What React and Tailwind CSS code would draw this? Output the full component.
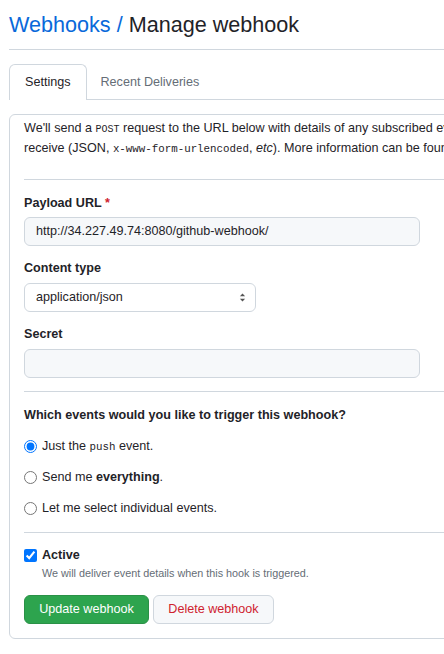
import React from 'react';

const App = () => {
  const mono = { fontFamily: '"Liberation Mono", "DejaVu Sans Mono", monospace' };

  return (
    <div className="w-[444px] h-[654px] overflow-hidden bg-white text-[#1f2328]" style={{ fontFamily: '"Liberation Sans", Arial, sans-serif' }}>
      <div className="w-[760px] pl-[9px]">
        {/* Header */}
        <h2 className="text-[21.6px] leading-[28px] pt-[11px] pb-[10px] border-b border-[#d0d7de]">
          <span className="text-[#0969da]">Webhooks /</span> Manage webhook
        </h2>

        {/* Tabs */}
        <div className="flex mt-[14px] border-b border-[#d0d7de] h-[36px]">
          <div className="px-[15px] h-[36px] flex items-center text-[12.6px] border border-b-0 border-[#d0d7de] rounded-t-[6px] bg-white -mb-px">
            Settings
          </div>
          <div className="px-[14px] h-[36px] flex items-center text-[12.6px] text-[#656d76]">Recent Deliveries</div>
        </div>

        {/* Box */}
        <div className="mt-[14px] border border-[#d0d7de] rounded-[6px] px-[14px] pt-[3px] pb-[14px] text-[12.6px]">
          <p className="leading-[20px]">
            <span className="block whitespace-nowrap h-[20px]">
              We'll send a <span className="text-[10px] leading-none" style={mono}>POST</span> request to the URL below with details of any subscribed events. You can also specify which data format you'd like to
            </span>
            <span className="block whitespace-nowrap h-[20px]">
              receive (JSON, <span className="text-[10.8px] leading-none" style={mono}>x-www-form-urlencoded</span>, <em>etc</em>). More information can be found in our developer documentation.
            </span>
          </p>

          <div className="border-t border-[#d0d7de] mt-[21px] pt-[13px]">
            <label className="block font-bold leading-[20px]">
              Payload URL <span className="text-[#cf222e]">*</span>
            </label>
            <div className="mt-[4px] w-[396px] h-[29px] border border-[#d0d7de] rounded-[6px] bg-[#f6f8fa] px-[11px] flex items-center">
              http://34.227.49.74:8080/github-webhook/
            </div>

            <label className="block font-bold leading-[20px] mt-[12px]">Content type</label>
            <div className="mt-[5px] w-[232px] h-[29px] border border-[#d0d7de] rounded-[6px] bg-white pl-[11px] pr-[9px] flex items-center justify-between">
              <span>application/json</span>
              <svg width="7" height="11" viewBox="0 0 8 12">
                <path d="M4 1.5 L7 4.5 H1 Z" fill="#555" />
                <path d="M4 10.5 L7 7.5 H1 Z" fill="#555" />
              </svg>
            </div>

            <label className="block font-bold leading-[20px] mt-[12px]">Secret</label>
            <div className="mt-[5px] w-[396px] h-[29px] border border-[#d0d7de] rounded-[6px] bg-[#f6f8fa]" />
          </div>

          <div className="border-t border-[#d0d7de] mt-[13px] pt-[13px]">
            <h3 className="font-bold leading-[20px]">Which events would you like to trigger this webhook?</h3>
            <div className="mt-[11px] flex flex-col gap-[11px]">
              <label className="flex items-center gap-[5px] h-[20px]">
                <input type="radio" name="ev" defaultChecked className="w-[13px] h-[13px] m-0" />
                <span>
                  Just the <span className="text-[10.8px]" style={mono}>push</span> event.
                </span>
              </label>
              <label className="flex items-center gap-[5px] h-[20px]">
                <input type="radio" name="ev" className="w-[13px] h-[13px] m-0" />
                <span>
                  Send me <b>everything</b>.
                </span>
              </label>
              <label className="flex items-center gap-[5px] h-[20px]">
                <input type="radio" name="ev" className="w-[13px] h-[13px] m-0" />
                <span>Let me select individual events.</span>
              </label>
            </div>
          </div>

          <div className="border-t border-[#d0d7de] mt-[14px] pt-[12px]">
            <label className="flex items-center gap-[5px] h-[20px]">
              <input type="checkbox" defaultChecked className="w-[13px] h-[13px] m-0" />
              <span className="font-bold">Active</span>
            </label>
            <p className="ml-[18px] text-[10.8px] leading-[16px] text-[#656d76]">
              We will deliver event details when this hook is triggered.
            </p>

            <div className="flex gap-[4px] mt-[14px]">
              <button className="h-[29px] w-[125px] rounded-[6px] bg-[#2da44e] border border-[#2a9147] text-white">
                Update webhook
              </button>
              <button className="h-[29px] w-[121px] rounded-[6px] bg-[#f6f8fa] border border-[#d0d7de] text-[#cf222e]">
                Delete webhook
              </button>
            </div>
          </div>
        </div>
      </div>
    </div>
  );
};

export default App;
